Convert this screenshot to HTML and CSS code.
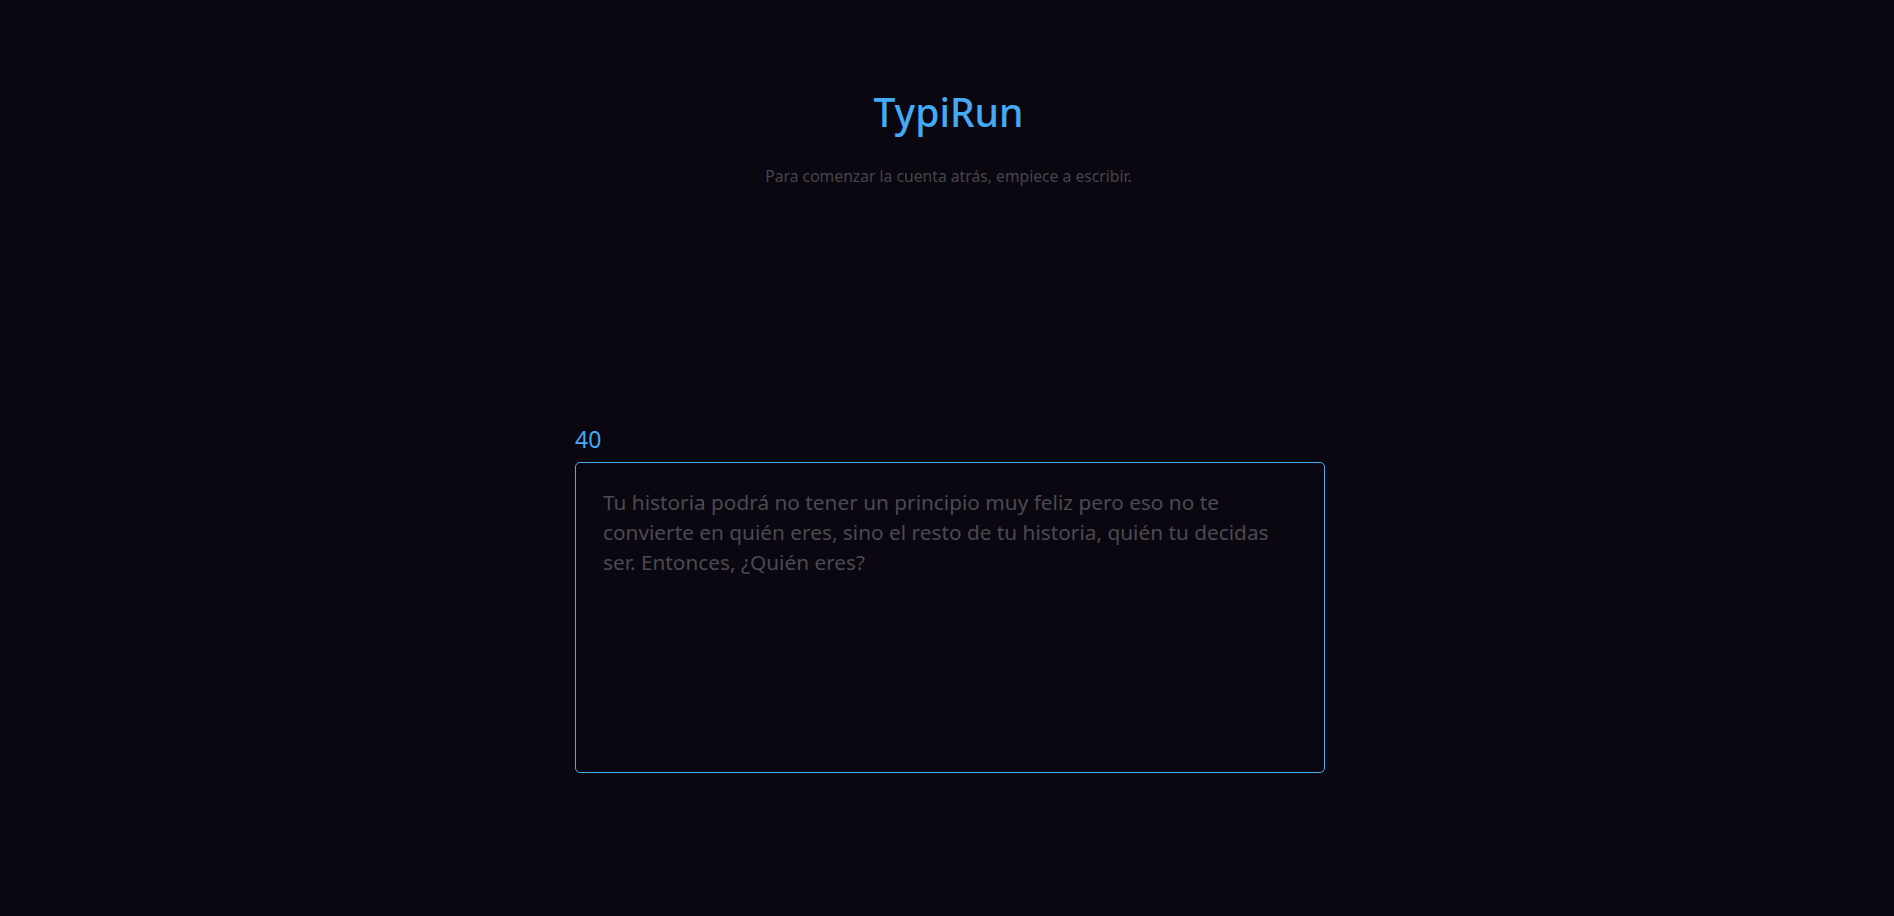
FILE: index.html
```html
<!DOCTYPE html>
<html lang="es">
<head>
<meta charset="utf-8">
<title>TypiRun</title>
<link rel="stylesheet" href="styles.css">
</head>
<body>
<div class="page">
  <header class="header">
    <h1 class="title">TypiRun</h1>
    <p class="subtitle">Para comenzar la cuenta atrás, empiece a escribir.</p>
  </header>
  <main class="game">
    <div class="counter">40</div>
    <textarea class="typing" placeholder="Tu historia podrá no tener un principio muy feliz pero eso no te&#10;convierte en quién eres, sino el resto de tu historia, quién tu decidas&#10;ser. Entonces, ¿Quién eres?"></textarea>
  </main>
</div>
</body>
</html>
```

FILE: styles.css
```css
* { box-sizing: border-box; }
html, body {
  margin: 0;
  padding: 0;
  background: #0a0710;
}
body {
  font-family: "Noto Sans", "Open Sans", sans-serif;
}
.page {
  display: flex;
  flex-direction: column;
  align-items: center;
}
.header {
  display: flex;
  flex-direction: column;
  align-items: center;
  padding-top: 89px;
  margin-left: 3px;
}
.title {
  margin: 0;
  font-size: 39px;
  line-height: 46px;
  font-weight: 500;
  color: #45aaf5;
}
.subtitle {
  margin: 31px 0 0;
  font-size: 15.7px;
  line-height: 20px;
  color: #46454b;
}
.game {
  width: 750px;
  margin-top: 238px;
  margin-left: 6px;
  display: flex;
  flex-direction: column;
  gap: 8px;
}
.counter {
  font-size: 23px;
  line-height: 30px;
  color: #45aaf5;
}
.typing {
  width: 750px;
  height: 311px;
  background: transparent;
  border: 1px solid #45aef5;
  border-radius: 5px;
  padding: 24px 20px 20px 27px;
  font-family: inherit;
  font-size: 20.8px;
  line-height: 30px;
  color: #cfcfcf;
  resize: none;
  outline: none;
}
.typing::placeholder {
  color: #4b4a50;
  opacity: 1;
}
```
